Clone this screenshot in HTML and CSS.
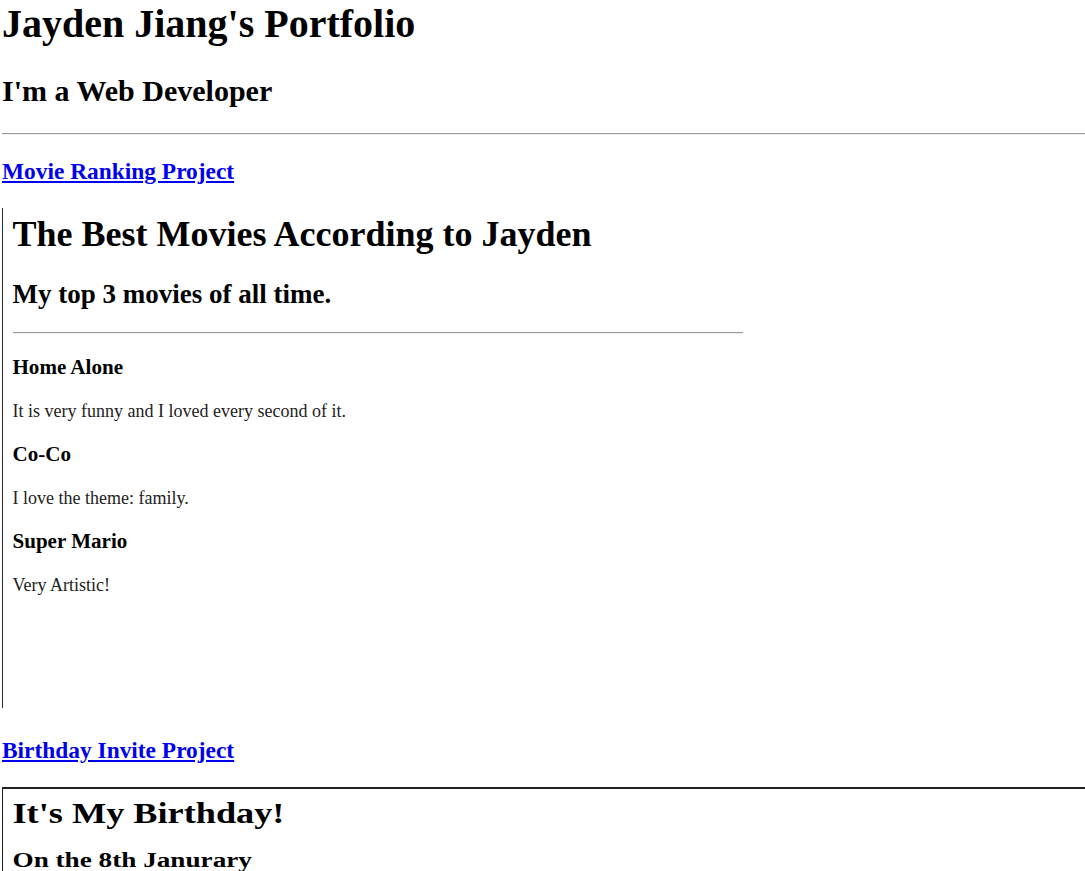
FILE: index.html
```html
<!DOCTYPE html>
<html lang="en">
<head>
<meta charset="utf-8">
<title>Jayden Jiang's Portfolio</title>
<link rel="stylesheet" href="styles.css">
</head>
<body>
  <h1 class="title">Jayden Jiang's Portfolio</h1>
  <h2 class="subtitle">I'm a Web Developer</h2>
  <hr class="rule">

  <h3 class="project-link"><a href="#movies">Movie Ranking Project</a></h3>
  <div class="frame frame-movies" id="movies">
    <div class="frame-body">
      <h1 class="movies-title">The Best Movies According to Jayden</h1>
      <h2 class="movies-sub">My top 3 movies of all time.</h2>
      <hr class="movies-rule">
      <h3 class="movie-name">Home Alone</h3>
      <p class="movie-text">It is very funny and I loved every second of it.</p>
      <h3 class="movie-name">Co-Co</h3>
      <p class="movie-text">I love the theme: family.</p>
      <h3 class="movie-name">Super Mario</h3>
      <p class="movie-text">Very Artistic!</p>
    </div>
  </div>

  <h3 class="project-link"><a href="#birthday">Birthday Invite Project</a></h3>
  <div class="frame frame-birthday" id="birthday">
    <div class="frame-body stretched">
      <h1 class="bday-title">It's My Birthday!</h1>
      <h2 class="bday-sub">On the 8th Janurary</h2>
    </div>
  </div>
</body>
</html>
```

FILE: styles.css
```css
html {
  overflow: hidden;
  background: #ffffff;
}

body {
  margin: 0;
  padding: 0 0 0 2px;
  width: 1200px;
  font-family: "Liberation Serif", "Times New Roman", serif;
  font-size: 20px;
  color: #000000;
}

.title {
  font-size: 40px;
  font-weight: bold;
  margin: 0 0 26.8px;
}

.subtitle {
  font-size: 30px;
  font-weight: bold;
  margin: 24.9px 0;
}

.rule {
  margin: 10px 0;
  height: 0;
  border: 0;
  border-top: 1px solid #9a9a9a;
  border-bottom: 1px solid #eeeeee;
}

.project-link {
  font-size: 23.4px;
  font-weight: bold;
  margin: 23.4px 0;
}

.project-link a {
  color: #0000ee;
  text-decoration: underline;
}

.frame {
  display: flow-root;
  box-sizing: border-box;
  margin-bottom: 28.15px;
}

.frame-movies {
  width: 750px;
  height: 500px;
  border-left: 1px solid #2a2a2a;
  padding-left: 1.5px;
}

.frame-body {
  display: flow-root;
  padding: 0 9px 0 8px;
}

.movies-title {
  font-size: 36px;
  font-weight: bold;
  margin: 4.4px 0 24.1px;
}

.movies-sub {
  font-size: 27px;
  font-weight: bold;
  margin: 23.1px 0 21.9px;
}

.movies-rule {
  margin: 9px 0 21.5px;
  height: 0;
  border: 0;
  border-top: 1px solid #9a9a9a;
  border-bottom: 1px solid #eeeeee;
}

.movie-name {
  font-size: 21.06px;
  font-weight: bold;
  margin: 20.5px 0;
}

.movie-text {
  font-size: 18px;
  margin: 18px 0;
  color: #222222;
}

.frame-birthday {
  width: 1150px;
  height: 200px;
  border-top: 2.5px solid #222222;
  border-left: 1.5px solid #222222;
  padding-left: 1px;
}

.stretched {
  padding: 0 0 0 6.8px;
  transform: scaleX(1.25);
  transform-origin: 0 0;
}

.bday-title {
  font-size: 29px;
  font-weight: bold;
  margin: 8.25px 0 0;
}

.bday-sub {
  font-size: 21.75px;
  font-weight: bold;
  margin: 17.3px 0 0;
}
```
